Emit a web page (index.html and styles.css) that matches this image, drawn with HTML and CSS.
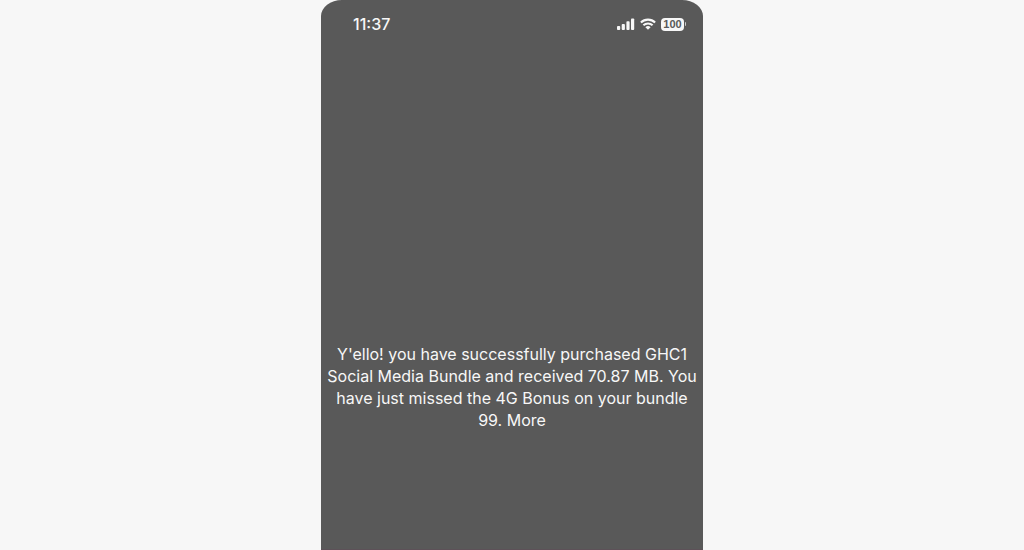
FILE: index.html
```html
<!DOCTYPE html>
<html lang="en">
<head>
<meta charset="utf-8">
<meta name="viewport" content="width=device-width, initial-scale=1">
<title>Bundle purchase</title>
<link rel="stylesheet" href="styles.css">
</head>
<body>
<main class="phone">
  <header class="status-bar">
    <time class="clock">11:37</time>
    <div class="indicators">
      <svg class="signal" viewBox="0 0 18 12" role="img" aria-label="Signal strength">
        <rect x="0" y="8" width="3.2" height="4" rx="0.9"/>
        <rect x="4.7" y="6" width="3.2" height="6" rx="0.9"/>
        <rect x="9.4" y="3.2" width="3.2" height="8.8" rx="0.9"/>
        <rect x="14" y="0.4" width="3.2" height="11.6" rx="0.9"/>
      </svg>
      <svg class="wifi" viewBox="0 0 16 12" role="img" aria-label="Wi-Fi">
        <path d="M0.9 4.5a10.2 10.2 0 0 1 14.2 0M3.4 7.3a6.6 6.6 0 0 1 9.2 0" fill="none" stroke="currentColor" stroke-width="2.1"/>
        <path d="M8 11.8L5.4 9.3a3.8 3.8 0 0 1 5.2 0z"/>
      </svg>
      <div class="battery"><span class="battery-level">100</span><span class="battery-tip"></span></div>
    </div>
  </header>
  <p class="message">Y'ello! you have successfully purchased GHC1 Social Media Bundle and received 70.87 MB. You have just missed the 4G Bonus on your bundle 99. More</p>
</main>
</body>
</html>
```
FILE: styles.css
```css
body {
  margin: 0;
  min-height: 100vh;
  display: flex;
  justify-content: center;
  background: #f7f7f7;
  color: #f7f7f7;
  font-family: Inter, "Liberation Sans", sans-serif;
}

.phone {
  box-sizing: border-box;
  width: 100%;
  max-width: 382px;
  display: flex;
  flex-direction: column;
  background: #595959;
  border-bottom: 1px solid #5d5158;
  border-radius: 21px 21px 0 0 / 16px 16px 0 0;
}

.status-bar {
  display: flex;
  align-items: center;
  justify-content: space-between;
  padding: 14px 17px 0 32px;
}

.clock {
  font-size: 16px;
  line-height: 20px;
  font-weight: 500;
}

.indicators {
  display: flex;
  align-items: center;
  gap: 5px;
}

.signal,
.wifi {
  height: 12px;
  fill: currentColor;
}

.signal {
  width: 18px;
}

.wifi {
  width: 16px;
}

.battery {
  display: flex;
  align-items: center;
  gap: 1px;
}

.battery-level {
  width: 23px;
  border-radius: 4px;
  background: #f7f7f7;
  color: #595959;
  font-family: "Liberation Sans", sans-serif;
  font-size: 11px;
  line-height: 13px;
  font-weight: 700;
  text-align: center;
}

.battery-tip {
  width: 1px;
  height: 4px;
  border-radius: 0 2px 2px 0;
  background: #cccccc;
}

.message {
  margin: 309px 0 0;
  padding: 0 4px;
  font-size: 16px;
  line-height: 22px;
  text-align: center;
}
```
